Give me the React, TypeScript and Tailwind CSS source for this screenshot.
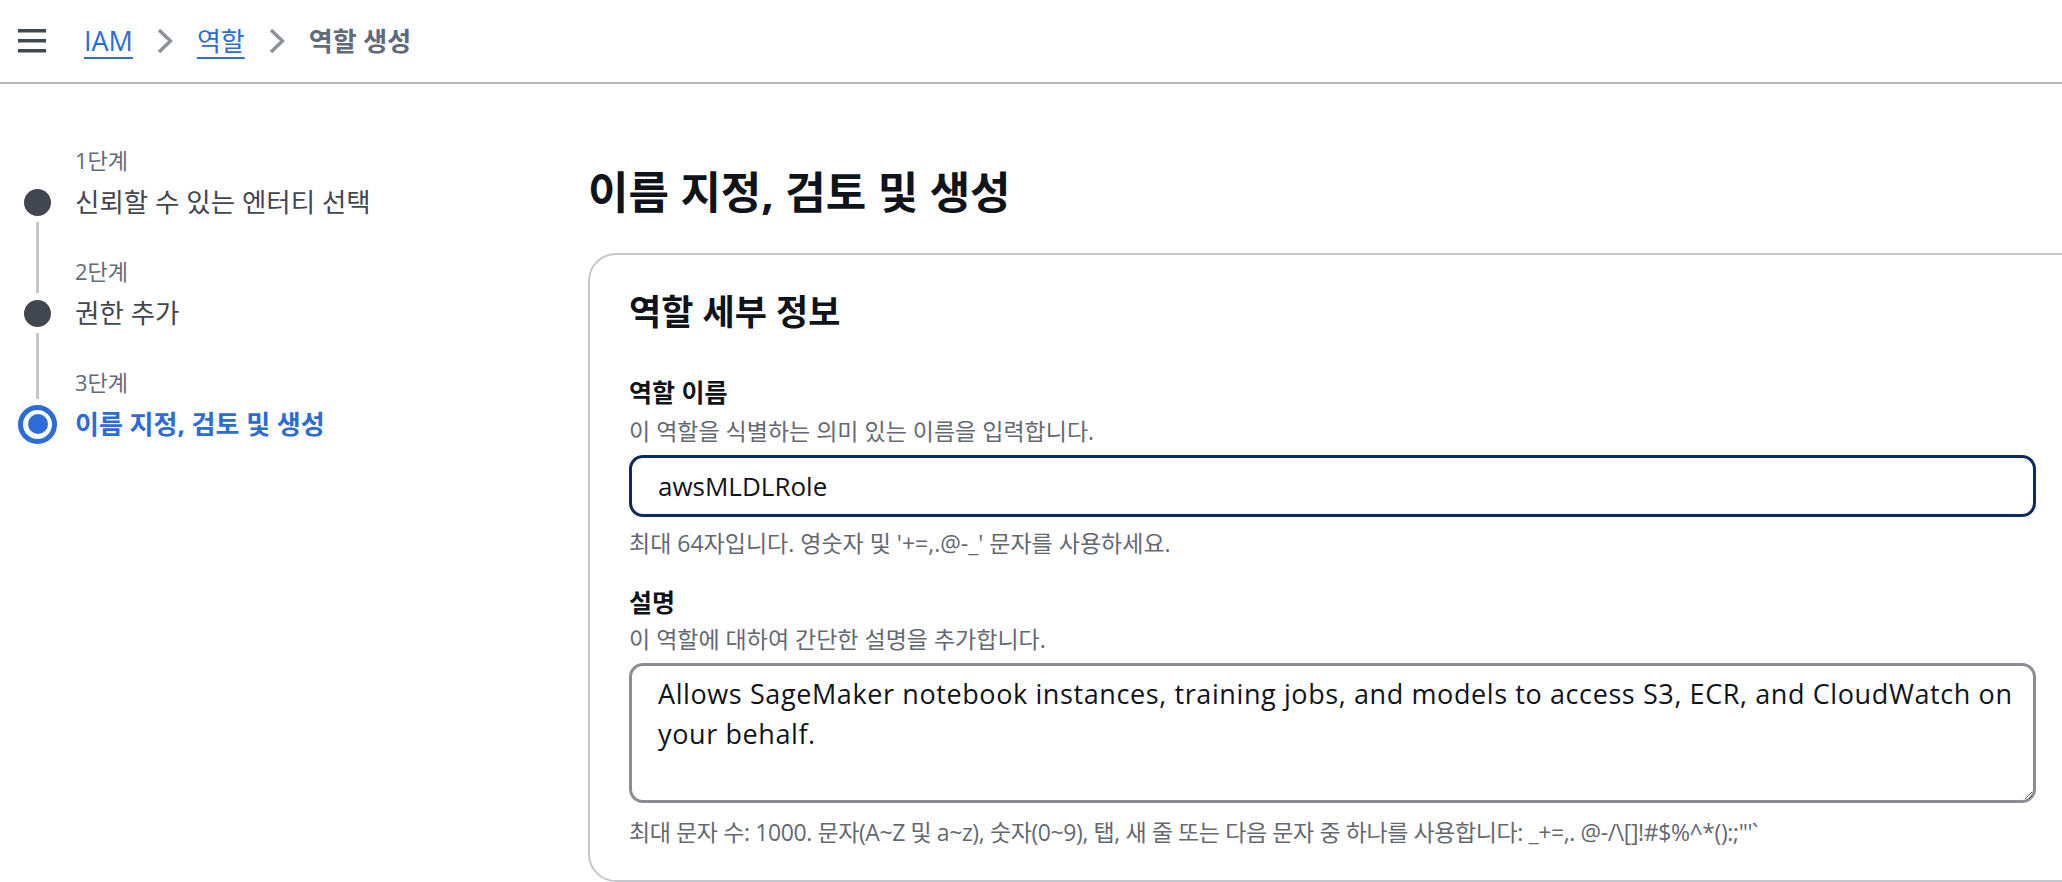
import type { ReactNode } from "react";

// IAM "create role" wizard – step 3 (name, review and create)

function MenuIcon() {
  return (
    <svg width="28" height="24" viewBox="0 0 28 24" fill="#414750" className="shrink-0">
      <rect x="0" y="0" width="28" height="3.5" />
      <rect x="0" y="10" width="28" height="3.5" />
      <rect x="0" y="20" width="28" height="3.5" />
    </svg>
  );
}

function Chevron() {
  return (
    <svg width="16" height="26" viewBox="0 0 16 26" fill="none" className="shrink-0">
      <path d="M2 2 L13.5 13 L2 24" stroke="#8d9199" strokeWidth="3.6" />
    </svg>
  );
}

function StepLabel({ children, line, last }: { children: ReactNode; line?: boolean; last?: boolean }) {
  return (
    <div className="flex h-[71px]">
      <div className="w-[39px] flex flex-col items-center">
        {line && <div className={`flex-1 w-[3px] bg-[#c6c6cd] ${last ? "mb-[5px]" : ""}`} />}
      </div>
      <div className="ml-[18px] flex items-end pb-[8px] text-[22px] leading-[28px] text-[#5f6b7a]">
        {children}
      </div>
    </div>
  );
}

function StepTitle({ children, current }: { children: ReactNode; current?: boolean }) {
  return (
    <div className="flex h-[40px] items-center">
      <div className="w-[39px] flex justify-center">
        {current ? (
          <div className="w-[39px] h-[39px] rounded-full border-[5px] border-[#2b6cd9] flex items-center justify-center">
            <div className="w-[20px] h-[20px] rounded-full bg-[#2b6cd9]" />
          </div>
        ) : (
          <div className="w-[27px] h-[27px] rounded-full bg-[#424650]" />
        )}
      </div>
      <div
        className={
          current
            ? "ml-[18px] text-[26px] leading-[40px] font-bold text-[#2b6cd9]"
            : "ml-[18px] text-[26.5px] leading-[40px] text-[#424650]"
        }
      >
        {children}
      </div>
    </div>
  );
}

export default function App() {
  return (
    <div className="w-[2062px] h-[882px] overflow-hidden bg-white text-[#0f141a] font-['Open_Sans','Noto_Sans_CJK_KR',sans-serif]">
      {/* top bar with breadcrumbs */}
      <header className="h-[84px] border-b-2 border-[#b6b6bd] flex items-center pl-[18px]">
        <MenuIcon />
        <nav className="ml-[38px] flex items-center gap-[24px] text-[26px] leading-[32px]">
          <a className="text-[27px] text-[#2b6cd9] underline decoration-2 underline-offset-[6px]">IAM</a>
          <Chevron />
          <a className="text-[#2b6cd9] underline decoration-2 underline-offset-[6px]">역할</a>
          <Chevron />
          <span className="font-bold text-[#5f6b7a]">역할 생성</span>
        </nav>
      </header>

      <div className="flex">
        {/* wizard steps */}
        <aside className="w-[588px] shrink-0 pl-[18px] pt-[27px]">
          <StepLabel>1단계</StepLabel>
          <StepTitle>신뢰할 수 있는 엔터티 선택</StepTitle>
          <StepLabel line>2단계</StepLabel>
          <StepTitle>권한 추가</StepTitle>
          <StepLabel line last>3단계</StepLabel>
          <StepTitle current>이름 지정, 검토 및 생성</StepTitle>
        </aside>

        <main className="w-[1489px] shrink-0 pt-[82px]">
          <h1 className="text-[44px] leading-[52px] font-bold">이름 지정, 검토 및 생성</h1>

          <section className="mt-[35px] border-2 border-[#c6c6cd] rounded-l-[28px] px-[39px] pt-[37px] pb-[33px]">
            <h2 className="text-[35px] leading-[40px] font-bold">역할 세부 정보</h2>

            <div className="mt-[44px]">
              <label className="block text-[25px] leading-[32px] font-bold">역할 이름</label>
              <p className="mt-[8px] text-[23px] leading-[30px] text-[#656871]">
                이 역할을 식별하는 의미 있는 이름을 입력합니다.
              </p>
              <input
                className="mt-[9px] block w-full h-[62px] rounded-[14px] border-[3px] border-[#0e2a5c] px-[26px] text-[26px] text-[#0f141a] outline-none"
                defaultValue="awsMLDLRole"
              />
              <p className="mt-[11px] text-[23px] leading-[30px] text-[#656871]">
                최대 64자입니다. 영숫자 및 '+=,.@-_' 문자를 사용하세요.
              </p>
            </div>

            <div className="mt-[28px]">
              <label className="block text-[25px] leading-[32px] font-bold">설명</label>
              <p className="mt-[6px] text-[23px] leading-[30px] text-[#656871]">
                이 역할에 대하여 간단한 설명을 추가합니다.
              </p>
              <textarea
                className="mt-[9px] block w-full h-[140px] rounded-[14px] border-[3px] border-[#8c8c94] pl-[26px] pr-[12px] pt-[8px] text-[27px] leading-[40px] tracking-[0.6px] text-[#0f141a] outline-none"
                defaultValue="Allows SageMaker notebook instances, training jobs, and models to access S3, ECR, and CloudWatch on your behalf."
              />
              <p className="mt-[14px] text-[23px] leading-[30px] tracking-[-0.4px] text-[#656871]">
                최대 문자 수: 1000. 문자(A~Z 및 a~z), 숫자(0~9), 탭, 새 줄 또는 다음 문자 중 하나를 사용합니다: _+=,. @-/\[{}]!#$%^*():;"'`
              </p>
            </div>
          </section>
        </main>
      </div>
    </div>
  );
}
